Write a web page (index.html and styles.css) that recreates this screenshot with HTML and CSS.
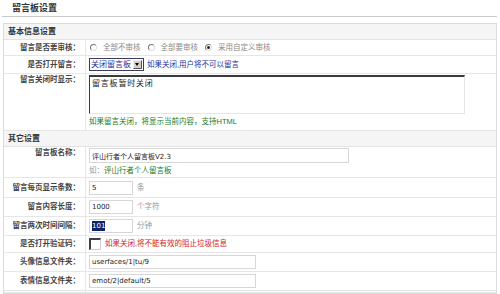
FILE: index.html
```html
<!DOCTYPE html>
<html lang="zh-CN">

<head>
    <meta charset="UTF-8">
    <title>留言板设置</title>
    <link rel="stylesheet" href="styles.css">
</head>

<body>
    <div class="page-title">留言板设置</div>

    <div class="panel">
        <div class="panel-head">基本信息设置</div>

        <div class="row h15">
            <div class="label">留言是否要审核：</div>
            <div class="field">
                <span class="radio"></span><span class="opt">全部不审核</span>
                <span class="radio"></span><span class="opt">全部要审核</span>
                <span class="radio checked"></span><span class="opt">采用自定义审核</span>
            </div>
        </div>

        <div class="row h17">
            <div class="label">是否打开留言：</div>
            <div class="field">
                <div class="select"><span class="select-text">关闭留言板</span><span class="select-arrow"></span></div>
                <span class="hint-blue">如果关闭,用户将不可以留言</span>
            </div>
        </div>

        <div class="row h56 top">
            <div class="label">留言关闭时显示：</div>
            <div class="field stack">
                <textarea class="area">留言板暂时关闭</textarea>
                <div class="hint-green">如果留言关闭，将显示当前内容，支持HTML</div>
            </div>
        </div>

        <div class="panel-head">其它设置</div>

        <div class="row h30 top">
            <div class="label">留言板名称：</div>
            <div class="field stack">
                <input class="text w-name" type="text" value="评山行者个人留言板V2.3">
                <div class="hint-green"><span class="gray">如：</span>评山行者个人留言板</div>
            </div>
        </div>

        <div class="row h19">
            <div class="label">留言每页显示条数：</div>
            <div class="field">
                <input class="text w-num" type="text" value="5"><span class="unit">条</span>
            </div>
        </div>

        <div class="row h18">
            <div class="label">留言内容长度：</div>
            <div class="field">
                <input class="text w-num" type="text" value="1000"><span class="unit">个字符</span>
            </div>
        </div>

        <div class="row h18">
            <div class="label">留言两次时间间隔：</div>
            <div class="field">
                <div class="text w-num fake"><span class="sel">101</span></div><span class="unit">分钟</span>
            </div>
        </div>

        <div class="row h16">
            <div class="label">是否打开验证码：</div>
            <div class="field">
                <span class="check"></span>
                <span class="hint-red">如果关闭,将不能有效的阻止垃圾信息</span>
            </div>
        </div>

        <div class="row h18">
            <div class="label">头像信息文件夹：</div>
            <div class="field">
                <input class="text w-path" type="text" value="userfaces/1|tu/9">
            </div>
        </div>

        <div class="row h18">
            <div class="label">表情信息文件夹：</div>
            <div class="field">
                <input class="text w-path" type="text" value="emot/2|default/5">
            </div>
        </div>

        <div class="row h1">
            <div class="label"></div>
            <div class="field"></div>
        </div>
    </div>
</body>

</html>
```

FILE: styles.css
```css
/* admin settings page */
body {
    margin: 0;
    background-color: #fff;
    color: #333;
    font-family: "Liberation Sans", "Noto Sans CJK SC", sans-serif;
    font-size: 7.5px;
    line-height: 10px;
}

.page-title {
    height: 16px;
    margin: 0 3px 0 2px;
    padding-left: 10px;
    border-bottom: 1px solid #c9c9c9;
    font-size: 9px;
    font-weight: bold;
    line-height: 16px;
    color: #333;
}

.panel {
    margin: 6px 3px 0;
    border: 1px solid #dcdcdc;
}

.panel-head {
    height: 15px;
    padding-left: 4px;
    background-color: #f5f5f5;
    border-bottom: 1px solid #e2e2e2;
    font-size: 8px;
    font-weight: bold;
    line-height: 15px;
    color: #333;
}

.row {
    display: grid;
    grid-template-columns: 82px 1fr;
    border-bottom: 1px solid #e6e6e6;
}

.h1 { height: 1px; }
.h15 { height: 15px; }
.h16 { height: 16px; }
.h17 { height: 17px; }
.h18 { height: 18px; }
.h19 { height: 19px; }
.h30 { height: 30px; }
.h56 { height: 56px; }

.label {
    display: flex;
    align-items: center;
    justify-content: flex-end;
    padding-right: 5px;
    border-right: 1px solid #e6e6e6;
    font-weight: bold;
    color: #444;
    white-space: nowrap;
}

.field {
    display: flex;
    align-items: center;
    padding-left: 3px;
    white-space: nowrap;
}

.row.top .label {
    align-items: flex-start;
    padding-top: 1px;
}

.field.stack {
    flex-direction: column;
    align-items: flex-start;
    justify-content: flex-start;
    padding-top: 1px;
}

/* radios */
.radio {
    display: inline-block;
    position: relative;
    width: 5px;
    height: 5px;
    margin: 0 6px 0 1px;
    border: 1px solid;
    border-color: #777 #ddd #ddd #777;
    border-radius: 50%;
    background-color: #fff;
}

.radio.checked::after {
    content: "";
    position: absolute;
    left: 1px;
    top: 1px;
    width: 3px;
    height: 3px;
    border-radius: 50%;
    background-color: #222;
}

.opt {
    margin-right: 6px;
    color: #8a8a8a;
}

/* select */
.select {
    display: flex;
    align-items: center;
    width: 55px;
    height: 13px;
    box-sizing: border-box;
    border: 1px solid #3c3c5c;
    background-color: #fff;
}

.select-text {
    flex: 1;
    padding-left: 1px;
    color: #1c2f9c;
    font-size: 8px;
}

.select-arrow {
    position: relative;
    width: 9px;
    height: 9px;
    margin-right: 1px;
    box-sizing: border-box;
    border: 1px solid;
    border-color: #eee #555 #555 #eee;
    background-color: #d4d0c8;
}

.select-arrow::after {
    content: "";
    position: absolute;
    left: 1px;
    top: 2px;
    border-left: 2.5px solid transparent;
    border-right: 2.5px solid transparent;
    border-top: 3px solid #000;
}

.hint-blue {
    margin-left: 3px;
    color: #1c2f9c;
}

.hint-green {
    margin-top: 3px;
    color: #237a23;
}

.hint-red {
    margin-left: 4px;
    color: #d01a1a;
}

.gray {
    color: #999;
}

/* textarea */
.area {
    width: 376px;
    height: 39px;
    margin: 0;
    padding: 1px 2px;
    box-sizing: border-box;
    border: 1px solid;
    border-width: 2px 1px 1px 1px;
    border-color: #3a3a3a #e6e6e6 #e6e6e6 #3a3a3a;
    font-family: "Noto Sans CJK SC", sans-serif;
    font-size: 8px;
    line-height: 10px;
    letter-spacing: 0.8px;
    color: #222;
    resize: none;
    overflow: hidden;
}

/* text inputs */
.text {
    height: 15px;
    margin: 0;
    padding: 0 2px;
    box-sizing: border-box;
    border: 1px solid #d6d6d6;
    background-color: #fff;
    font-family: "DejaVu Sans", "Noto Sans CJK SC", sans-serif;
    font-size: 7px;
    color: #222;
    outline: none;
}

.w-name { width: 260px; }
.w-num { width: 44px; height: 14px; }
.w-path { width: 167px; height: 14px; }

.fake {
    display: flex;
    align-items: center;
}

.sel {
    background-color: #0a246a;
    color: #fff;
    line-height: 10px;
}

.unit {
    margin-left: 4px;
    color: #999;
}

/* checkbox */
.check {
    width: 12px;
    height: 12px;
    box-sizing: border-box;
    border: 1px solid;
    border-width: 2px 1px 1px 2px;
    border-color: #404040 #ccc #ccc #404040;
    background-color: #fff;
}
```
